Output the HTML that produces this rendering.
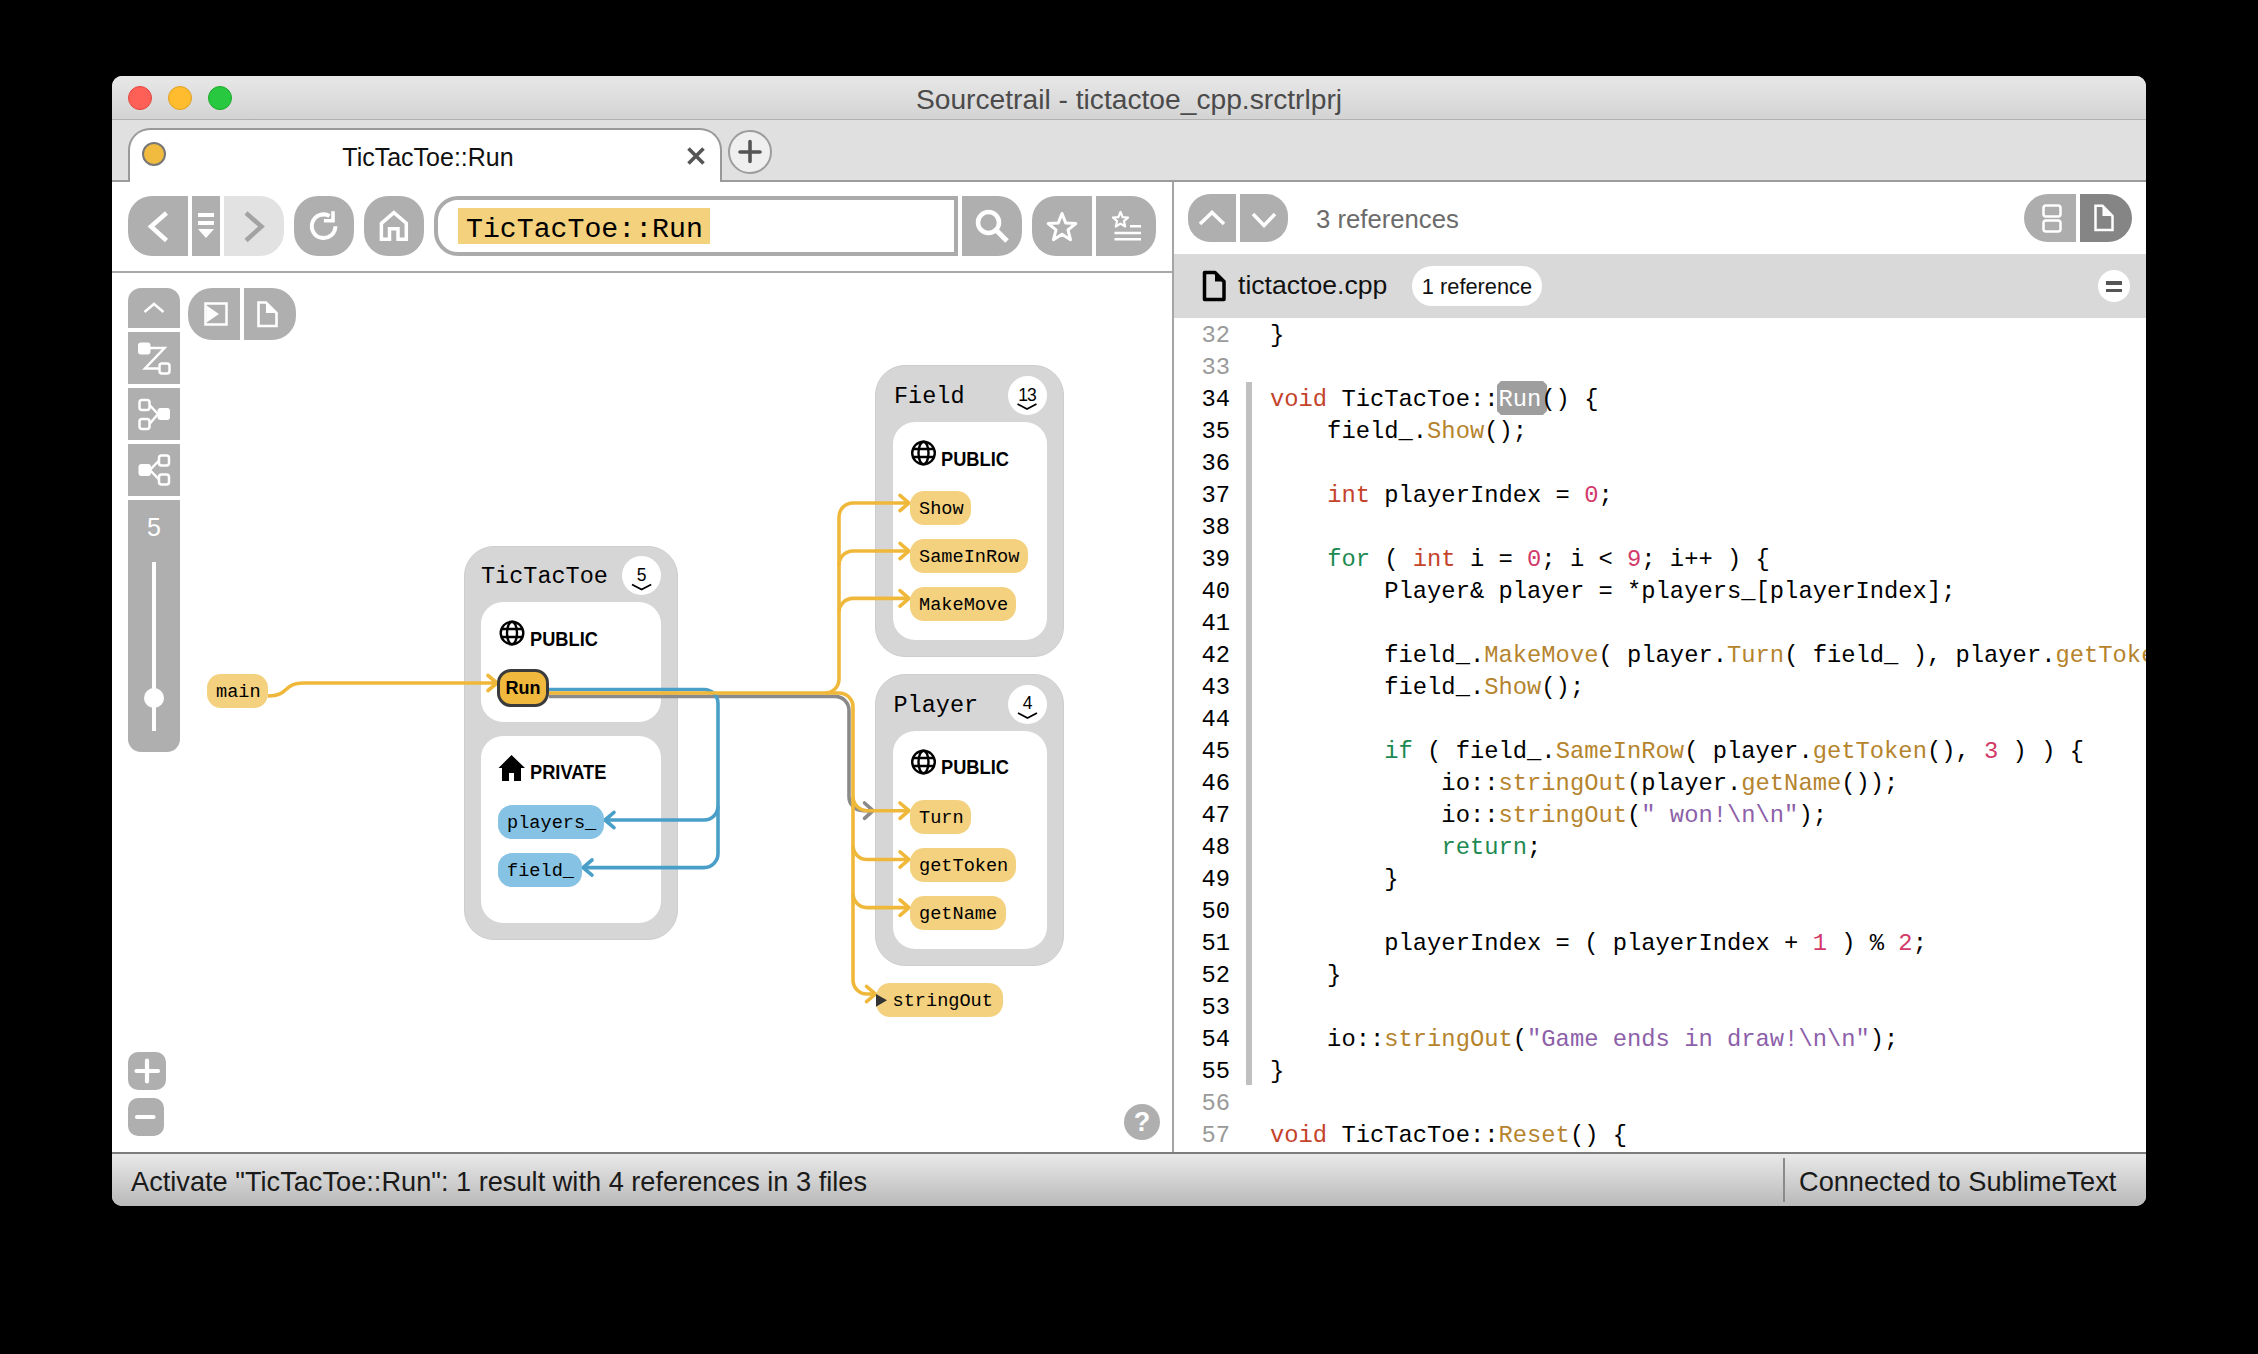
<!DOCTYPE html>
<html><head><meta charset="utf-8">
<style>
*{margin:0;padding:0;box-sizing:border-box}
html,body{width:2258px;height:1354px;background:#000;overflow:hidden}
body{font-family:"Liberation Sans",sans-serif;position:relative}
.a{position:absolute}
#win{position:absolute;left:112px;top:76px;width:2034px;height:1130px;border-radius:10px;overflow:hidden;background:#fff}
#pg{position:absolute;left:-112px;top:-76px;width:2258px;height:1354px}
.mono{font-family:"Liberation Mono",monospace}
.btn{background:#afafaf}
.nd{height:34px;border-radius:14px;background:#f3d17f;font-size:18.6px;line-height:37.3px;padding-left:9px;color:#000;white-space:nowrap}
.bl{background:#86c2e3}
.lbl{font-size:20.5px;font-weight:bold;line-height:22px;color:#000;transform:scaleX(0.89);transform-origin:0 0;white-space:nowrap}
.code{font-size:23.8px;line-height:32px;white-space:pre;color:#000}
.code .g{color:#9a9a9a}
.k{color:#c4432b}.c{color:#1e8a52}.f{color:#b5842d}.n{color:#d23a6a}.s{color:#8d60a9}.hl{color:#fff}


</style></head><body>
<div id="win"><div id="pg">

<!-- title bar -->
<div class="a" style="left:112px;top:76px;width:2034px;height:44px;background:linear-gradient(#e8e8e8,#d3d3d3);border-bottom:1px solid #b1b1b1"></div>
<div class="a" style="left:128px;top:86px;width:24px;height:24px;border-radius:50%;background:#fe5f57;border:1px solid #e14640"></div>
<div class="a" style="left:168px;top:86px;width:24px;height:24px;border-radius:50%;background:#febc2e;border:1px solid #dea123"></div>
<div class="a" style="left:208px;top:86px;width:24px;height:24px;border-radius:50%;background:#28c840;border:1px solid #1aab29"></div>
<div class="a" style="left:0;top:84px;width:2258px;text-align:center;font-size:28.2px;color:#4b4b4b;line-height:30px;letter-spacing:0">Sourcetrail - tictactoe_cpp.srctrlprj</div>

<!-- tab bar -->
<div class="a" style="left:112px;top:120px;width:2034px;height:62px;background:#e0e0e0;border-bottom:2px solid #9c9c9c"></div>
<div class="a" style="left:128px;top:128px;width:594px;height:54px;background:#fff;border:2px solid #999;border-bottom:none;border-radius:22px 22px 0 0"></div>
<div class="a" style="left:142px;top:142px;width:24px;height:24px;border-radius:50%;background:#f0bb3e;border:2px solid #777"></div>
<div class="a" style="left:131px;top:141.5px;width:594px;text-align:center;font-size:25px;line-height:30px;color:#111">TicTacToe::Run</div>
<svg class="a" style="left:684px;top:144px" width="24" height="24" viewBox="0 0 24 24"><path d="M4.5 4.5L19.5 19.5M19.5 4.5L4.5 19.5" stroke="#555" stroke-width="3.6"/></svg>
<div class="a" style="left:728px;top:130px;width:44px;height:44px;border-radius:50%;background:#efefef;border:2px solid #9c9c9c"></div>
<svg class="a" style="left:728px;top:130px" width="44" height="44" viewBox="0 0 44 44"><path d="M22 11.5V31.5M12 22H32" stroke="#555" stroke-width="3.6" stroke-linecap="round"/></svg>


<!-- main toolbar -->
<div class="a" style="left:112px;top:271px;width:1061px;height:2px;background:#a8a8a8"></div>
<div class="a" style="left:1172px;top:182px;width:2px;height:970px;background:#a5a5a5"></div>
<div class="a btn" style="left:128px;top:196px;width:60px;height:60px;border-radius:24px 0 0 24px"></div>
<div class="a btn" style="left:192px;top:196px;width:28px;height:60px"></div>
<div class="a" style="left:224px;top:196px;width:60px;height:60px;border-radius:0 24px 24px 0;background:#e2e2e2"></div>
<div class="a btn" style="left:294px;top:196px;width:60px;height:60px;border-radius:24px"></div>
<div class="a btn" style="left:364px;top:196px;width:60px;height:60px;border-radius:24px"></div>
<div class="a" style="left:434px;top:196px;width:524px;height:60px;border:4px solid #ababab;border-right-width:4px;border-radius:24px 0 0 24px;background:#fff"></div>
<div class="a" style="left:458px;top:208px;width:252px;height:36px;background:#f4d17d"></div>
<div class="a mono" style="left:458px;top:212.5px;width:252px;height:34px;font-size:28.2px;line-height:34px;padding-left:8px;color:#000">TicTacToe::Run</div>
<div class="a btn" style="left:962px;top:196px;width:60px;height:60px;border-radius:0 24px 24px 0"></div>
<div class="a btn" style="left:1032px;top:196px;width:60px;height:60px;border-radius:24px 0 0 24px"></div>
<div class="a btn" style="left:1096px;top:196px;width:60px;height:60px;border-radius:0 24px 24px 0"></div>
<svg class="a" style="left:112px;top:182px" width="1061" height="90" viewBox="112 182 1061 90">
 <g fill="none" stroke="#fff" stroke-width="4.5">
  <path d="M166.5 213L151 226.5L166.5 240.5"/>
  <path d="M246 213L261.5 226.5L246 240.5" stroke="#a3a3a3"/>
  <path d="M335.4 226.2A11.8 11.8 0 1 1 329.5 216" stroke-width="4"/><path d="M323.9 220.7H333V211.3" stroke-width="3.6"/>
  <path d="M381.4 239.2V223.3L393.9 212.6L406.3 223.3V239.2H398V228.7H389.5V239.2Z" stroke-width="3.5"/>
  <circle cx="988.5" cy="222.5" r="10.5" stroke-width="4.5"/>
  <path d="M996 230L1007 241" stroke-width="5"/>
  <path d="M1062.0 213.5L1065.7 222.9L1075.8 223.5L1068.0 229.9L1070.5 239.7L1062.0 234.3L1053.5 239.7L1056.0 229.9L1048.2 223.5L1058.3 222.9Z" stroke-width="3" stroke-linejoin="round"/>
  <path d="M1120.5 212.0L1122.6 217.1L1128.1 217.5L1123.9 221.1L1125.2 226.5L1120.5 223.6L1115.8 226.5L1117.1 221.1L1112.9 217.5L1118.4 217.1Z" stroke-width="2.2" stroke-linejoin="round"/>
  <path d="M1130 226.3H1141M1114.5 233H1141M1114.5 239.3H1141" stroke-width="2.6"/>
 </g>
 <path d="M198 213H214V217H198ZM198 221H214V225H198ZM198 229H214L206 238Z" fill="#fff"/>
 
</svg>

<!-- right toolbar -->
<div class="a btn" style="left:1188px;top:194px;width:48px;height:48px;border-radius:22px 0 0 22px"></div>
<div class="a btn" style="left:1240px;top:194px;width:48px;height:48px;border-radius:0 22px 22px 0"></div>
<div class="a" style="left:1316px;top:204px;font-size:25.7px;line-height:30px;color:#6b6b6b">3 references</div>
<div class="a" style="left:2024px;top:194px;width:52px;height:48px;border-radius:24px 0 0 24px;background:#adadad"></div>
<div class="a" style="left:2080px;top:194px;width:52px;height:48px;border-radius:0 24px 24px 0;background:#858585"></div>
<svg class="a" style="left:1174px;top:182px" width="972" height="72" viewBox="1174 182 972 72">
 <g fill="none" stroke="#fff">
  <path d="M1200 224L1212 212.5L1224 224" stroke-width="3.5"/>
  <path d="M1253 214L1264 225.5L1275 214" stroke-width="3.5"/>
  <rect x="2043.5" y="205.5" width="17" height="11" rx="2.5" stroke-width="2.5"/>
  <rect x="2043.5" y="220.5" width="17" height="11" rx="2.5" stroke-width="2.5"/>
  <path d="M2095.5 230V205.8H2102.5L2112.5 216V230Z" stroke-width="2.5"/>
 </g>
 <path d="M2102.5 205.8V216H2112.5Z" fill="#fff"/>
</svg>

<!-- file header -->
<div class="a" style="left:1174px;top:254px;width:972px;height:64px;background:#d9d9d9"></div>
<svg class="a" style="left:1200px;top:268px" width="30" height="36" viewBox="0 0 30 36">
 <path d="M4.5 31.5V4.5H15L24 13.5V31.5Z" fill="none" stroke="#000" stroke-width="3.5" stroke-linejoin="round"/>
 <path d="M15 4.5V13.5H24Z" fill="#000"/>
</svg>
<div class="a" style="left:1238px;top:270px;font-size:26.6px;line-height:30px;color:#111">tictactoe.cpp</div>
<div class="a" style="left:1412px;top:266px;width:130px;height:40px;border-radius:20px;background:#fff"></div>
<div class="a" style="left:1412px;top:272px;width:130px;text-align:center;font-size:21.8px;line-height:30px;color:#111">1 reference</div>
<div class="a" style="left:2098px;top:270px;width:32px;height:32px;border-radius:50%;background:#fff"></div>
<div class="a" style="left:2106px;top:281px;width:16px;height:3.5px;background:#555"></div>
<div class="a" style="left:2106px;top:288.5px;width:16px;height:3.5px;background:#555"></div>


<!-- graph toolbar -->
<div class="a btn" style="left:128px;top:288px;width:52px;height:40px;border-radius:13px 13px 0 0"></div>
<div class="a btn" style="left:128px;top:332px;width:52px;height:52px"></div>
<div class="a btn" style="left:128px;top:388px;width:52px;height:52px"></div>
<div class="a btn" style="left:128px;top:444px;width:52px;height:52px"></div>
<div class="a btn" style="left:128px;top:500px;width:52px;height:252px;border-radius:0 0 13px 13px"></div>
<div class="a" style="left:128px;top:512px;width:52px;text-align:center;font-size:25px;line-height:30px;color:#fff">5</div>
<div class="a" style="left:152px;top:562px;width:4px;height:169px;background:#fff"></div>
<div class="a" style="left:144px;top:688px;width:20px;height:20px;border-radius:50%;background:#fff"></div>
<div class="a btn" style="left:188px;top:288px;width:52px;height:52px;border-radius:24px 0 0 24px"></div>
<div class="a btn" style="left:244px;top:288px;width:52px;height:52px;border-radius:0 24px 24px 0"></div>
<svg class="a" style="left:120px;top:280px" width="190" height="220" viewBox="120 280 190 220">
 <g fill="none" stroke="#fff" stroke-width="2.5">
  <path d="M144.5 312L154 304L163.5 312"/>
  <path d="M149 348H164.5L145 368.5H159"/>
  <rect x="159.5" y="363.5" width="10" height="10" rx="2.5"/>
  <rect x="139.5" y="400" width="10" height="10" rx="2.5"/>
  <rect x="139.5" y="419" width="10" height="10" rx="2.5"/>
  <path d="M149.5 405L158 414L149.5 424"/>
  <rect x="159" y="455.5" width="10" height="10" rx="2.5"/>
  <rect x="159" y="474.5" width="10" height="10" rx="2.5"/>
  <path d="M159 460.5L150 470L159 479.5"/>
  <rect x="205.5" y="303.5" width="21" height="21"/>
  <path d="M258.5 326V302.5H266L276.5 313V326Z" stroke-width="2.6"/>
 </g>
 <g fill="#fff">
  <rect x="138" y="342.5" width="12.5" height="12" rx="3"/>
  <rect x="157.5" y="408" width="12.5" height="12" rx="3"/>
  <rect x="138.5" y="464" width="12.5" height="12" rx="3"/>
  <path d="M206.5 305.5L219 314L206.5 322.5Z"/>
  <path d="M266 302.5V313H276.5Z"/>
 </g>
</svg>
<div class="a btn" style="left:128px;top:1052px;width:38px;height:38px;border-radius:10px"></div>
<div class="a btn" style="left:128px;top:1098px;width:36px;height:38px;border-radius:10px"></div>
<svg class="a" style="left:120px;top:1045px" width="60" height="100" viewBox="120 1045 60 100">
 <path d="M147 1060.5V1081.5M136.5 1071H158" stroke="#fff" stroke-width="4.2" stroke-linecap="round"/>
 <path d="M137 1117H153.5" stroke="#fff" stroke-width="4.2" stroke-linecap="round"/>
</svg>
<div class="a btn" style="left:1124px;top:1104px;width:36px;height:36px;border-radius:50%"></div>
<div class="a" style="left:1124px;top:1106px;width:36px;text-align:center;font-size:27px;font-weight:bold;line-height:32px;color:#fff">?</div>

<!-- graph containers -->
<div class="a" style="left:464px;top:546px;width:214px;height:394px;border-radius:30px;background:#d6d6d6;border:1px solid #cdcdcd"></div>
<div class="a" style="left:481px;top:602px;width:180px;height:120px;border-radius:22px;background:#fff"></div>
<div class="a" style="left:481px;top:736px;width:180px;height:187px;border-radius:22px;background:#fff"></div>
<div class="a" style="left:875px;top:365px;width:189px;height:292px;border-radius:30px;background:#d6d6d6;border:1px solid #cdcdcd"></div>
<div class="a" style="left:892.5px;top:422px;width:154.5px;height:218px;border-radius:22px;background:#fff"></div>
<div class="a" style="left:875px;top:674px;width:189px;height:292px;border-radius:30px;background:#d6d6d6;border:1px solid #cdcdcd"></div>
<div class="a" style="left:892.5px;top:731px;width:154.5px;height:218px;border-radius:22px;background:#fff"></div>

<div class="a mono" style="left:481px;top:561.5px;font-size:23.5px;line-height:30px;color:#000">TicTacToe</div>
<div class="a mono" style="left:894px;top:381.5px;font-size:23.5px;line-height:30px;color:#000">Field</div>
<div class="a mono" style="left:893.5px;top:690.7px;font-size:23.5px;line-height:30px;color:#000">Player</div>

<div class="a" style="left:622px;top:555.5px;width:39px;height:39px;border-radius:50%;background:#fff"></div>
<div class="a" style="left:1007.5px;top:375.8px;width:39px;height:39px;border-radius:50%;background:#fff"></div>
<div class="a" style="left:1008px;top:684.8px;width:39px;height:39px;border-radius:50%;background:#fff"></div>
<div class="a" style="left:622px;top:564.6px;width:39px;text-align:center;font-size:17.5px;line-height:20px;color:#000">5</div>
<div class="a" style="left:1007.5px;top:385.4px;width:39px;text-align:center;font-size:17.5px;line-height:20px;color:#000;letter-spacing:-1px">13</div>
<div class="a" style="left:1008px;top:692.7px;width:39px;text-align:center;font-size:17.5px;line-height:20px;color:#000">4</div>
<svg class="a" style="left:0;top:0" width="2258" height="1354" viewBox="0 0 2258 1354">
 <g fill="none" stroke="#000" stroke-width="1.8">
  <path d="M632 584.5L641.6 589.5L651.2 584.5"/>
  <path d="M1017.5 404L1027 409L1036.5 404"/>
  <path d="M1018 713L1027.5 718L1037 713"/>
 </g>
</svg>

<!-- section labels -->
<svg class="a" style="left:0;top:0" width="2258" height="1354" viewBox="0 0 2258 1354">
 
 <g transform="translate(499 620)" fill="none" stroke="#000" stroke-width="2.4"><circle cx="13" cy="13" r="11.3"/><ellipse cx="13" cy="13" rx="5" ry="11.3"/><path d="M2.5 9H23.5M2.5 17H23.5"/></g>
 <g transform="translate(910.5 440)" fill="none" stroke="#000" stroke-width="2.4"><circle cx="13" cy="13" r="11.3"/><ellipse cx="13" cy="13" rx="5" ry="11.3"/><path d="M2.5 9H23.5M2.5 17H23.5"/></g>
 <g transform="translate(910.5 749)" fill="none" stroke="#000" stroke-width="2.4"><circle cx="13" cy="13" r="11.3"/><ellipse cx="13" cy="13" rx="5" ry="11.3"/><path d="M2.5 9H23.5M2.5 17H23.5"/></g>
 <path d="M511.5 755L498.5 768H502V781H509V773H514V781H521V768H525Z" fill="#000"/>
</svg>
<div class="a lbl" style="left:530px;top:627.8px">PUBLIC</div>
<div class="a lbl" style="left:530px;top:761px">PRIVATE</div>
<div class="a lbl" style="left:941.2px;top:447.9px">PUBLIC</div>
<div class="a lbl" style="left:941.2px;top:755.7px">PUBLIC</div>

<!-- edges -->
<svg class="a" style="left:0;top:0" width="2258" height="1354" viewBox="0 0 2258 1354">
 <g fill="none" stroke-width="3.6" stroke-linecap="butt">
  <path stroke="#8a8a8a" d="M549 696.4H835A14 14 0 0 1 849 710.4V796.7A14 14 0 0 0 863 810.7H873"/>
  <path stroke="#8a8a8a" stroke-linecap="round" stroke-linejoin="round" d="M864.5 803L873 810.7L864.5 818.4"/>
  <path stroke="#4a9fc9" d="M549 689.5H704A14 14 0 0 1 718 703.5V853.6A14 14 0 0 1 704 867.6H583"/>
  <path stroke="#4a9fc9" d="M718 806A14 14 0 0 1 704 820H605"/>
  <path stroke="#4a9fc9" stroke-linecap="round" stroke-linejoin="round" d="M592 860L583 867.6L592 875.2M614 812.4L605 820L614 827.6"/>
  <g stroke="#f0b83a">
   <path d="M268 696C290 696 282 683 304 683H496"/>
   <path d="M549 693H825A14 14 0 0 0 839 679V517A14 14 0 0 1 853 503H908"/>
   <path d="M839 565A14 14 0 0 1 853 551H908"/>
   <path d="M839 612.4A14 14 0 0 1 853 598.4H908"/>
   <path d="M825 693H839A14 14 0 0 1 853 707V980A14 14 0 0 0 867 994H874"/>
   <path d="M853 796.7A14 14 0 0 0 867 810.7H908"/>
   <path d="M853 845.5A14 14 0 0 0 867 859.5H908"/>
   <path d="M853 893.6A14 14 0 0 0 867 907.6H908"/>
   <g stroke-linecap="round" stroke-linejoin="round">
    <path d="M488 675.5L497 683L488 690.5"/>
    <path d="M900 495.3L909 503L900 510.7"/>
    <path d="M900 543.3L909 551L900 558.7"/>
    <path d="M900 590.7L909 598.4L900 606.1"/>
    <path d="M900 803L909 810.7L900 818.4"/>
    <path d="M900 851.8L909 859.5L900 867.2"/>
    <path d="M900 899.9L909 907.6L900 915.3"/>
    <path d="M866.5 986.3L875.5 994L866.5 1001.7"/>
   </g>
  </g>
 </g>
</svg>

<!-- nodes -->
<div class="a mono nd" style="left:207px;top:674px;width:61px">main</div>
<div class="a" style="left:497px;top:669px;width:52px;height:38px;border-radius:14px;background:#f0b93d;border:3px solid #3b3b3b;text-align:center;font-size:18px;font-weight:bold;line-height:32px;color:#000">Run</div>
<div class="a mono nd bl" style="left:498px;top:805px;width:106px">players_</div>
<div class="a mono nd bl" style="left:498px;top:852.5px;width:84px">field_</div>
<div class="a mono nd" style="left:910px;top:491px;width:61px">Show</div>
<div class="a mono nd" style="left:910px;top:539px;width:118px">SameInRow</div>
<div class="a mono nd" style="left:910px;top:587px;width:106px">MakeMove</div>
<div class="a mono nd" style="left:910px;top:800px;width:61px">Turn</div>
<div class="a mono nd" style="left:910px;top:847.5px;width:106px">getToken</div>
<div class="a mono nd" style="left:910px;top:895.5px;width:96px">getName</div>
<div class="a mono nd" style="left:875.5px;top:983px;width:127px;padding-left:17px">stringOut</div>
<svg class="a" style="left:875px;top:993px" width="14" height="16" viewBox="0 0 14 16"><path d="M1 1L12 7.3L1 13.8Z" fill="#333"/></svg>


<!-- code -->
<div class="a" style="left:1246px;top:382px;width:6px;height:703px;background:#c0c0c0"></div>
<div class="a" style="left:1497px;top:381px;width:50px;height:34px;background:#9e9e9e;clip-path:polygon(4px 0,46px 0,50px 4px,50px 30px,46px 34px,4px 34px,0 30px,0 4px)"></div>
<div class="a mono code" style="left:1170px;top:319.7px;width:60px;text-align:right"><div class="g">32</div><div class="g">33</div><div>34</div><div>35</div><div>36</div><div>37</div><div>38</div><div>39</div><div>40</div><div>41</div><div>42</div><div>43</div><div>44</div><div>45</div><div>46</div><div>47</div><div>48</div><div>49</div><div>50</div><div>51</div><div>52</div><div>53</div><div>54</div><div>55</div><div class="g">56</div><div class="g">57</div></div>
<div class="a mono code" style="left:1270px;top:319.7px;width:876px;overflow:hidden"><div>}</div><div>&nbsp;</div><div><span class="k">void</span> TicTacToe::<span class="hl">Run</span>() {</div><div>    field_.<span class="f">Show</span>();</div><div>&nbsp;</div><div>    <span class="k">int</span> playerIndex = <span class="n">0</span>;</div><div>&nbsp;</div><div>    <span class="c">for</span> ( <span class="k">int</span> i = <span class="n">0</span>; i &lt; <span class="n">9</span>; i++ ) {</div><div>        Player&amp; player = *players_[playerIndex];</div><div>&nbsp;</div><div>        field_.<span class="f">MakeMove</span>( player.<span class="f">Turn</span>( field_ ), player.<span class="f">getToken</span>() );</div><div>        field_.<span class="f">Show</span>();</div><div>&nbsp;</div><div>        <span class="c">if</span> ( field_.<span class="f">SameInRow</span>( player.<span class="f">getToken</span>(), <span class="n">3</span> ) ) {</div><div>            io::<span class="f">stringOut</span>(player.<span class="f">getName</span>());</div><div>            io::<span class="f">stringOut</span>(<span class="s">&quot; won!\n\n&quot;</span>);</div><div>            <span class="c">return</span>;</div><div>        }</div><div>&nbsp;</div><div>        playerIndex = ( playerIndex + <span class="n">1</span> ) % <span class="n">2</span>;</div><div>    }</div><div>&nbsp;</div><div>    io::<span class="f">stringOut</span>(<span class="s">&quot;Game ends in draw!\n\n&quot;</span>);</div><div>}</div><div>&nbsp;</div><div><span class="k">void</span> TicTacToe::<span class="f">Reset</span>() {</div></div>

<!-- status bar -->
<div class="a" style="left:112px;top:1152px;width:2034px;height:54px;background:linear-gradient(#e9e9e9,#b9b9b9);border-top:2px solid #7d7d7d"></div>
<div class="a" style="left:131px;top:1166.5px;font-size:27.2px;line-height:30px;color:#1a1a1a">Activate "TicTacToe::Run": 1 result with 4 references in 3 files</div>
<div class="a" style="left:1783px;top:1158px;width:2px;height:44px;background:#8a8a8a"></div>
<div class="a" style="left:1799px;top:1166.5px;font-size:27.2px;line-height:30px;color:#1a1a1a">Connected to SublimeText</div>

</div></div>
</body></html>
